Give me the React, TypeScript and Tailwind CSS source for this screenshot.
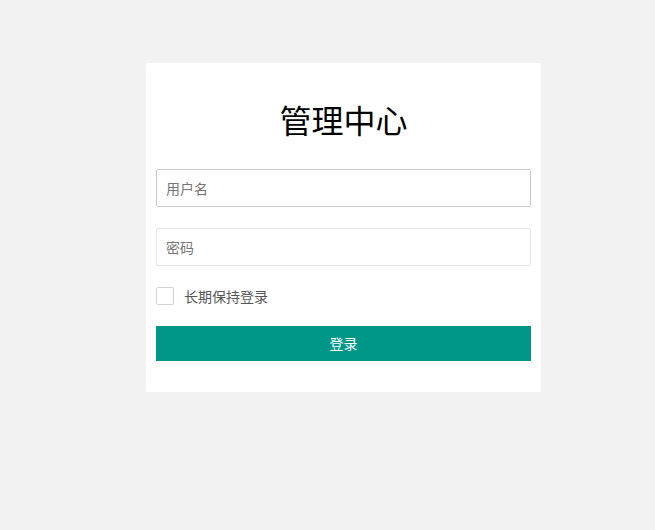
import { useState } from "react";

export default function App() {
  const [remember, setRemember] = useState(false);

  return (
    <div
      className="min-h-[530px] bg-[#f2f2f2] pt-[63px] pl-[146px]"
      style={{ fontFamily: '"Noto Sans CJK SC", "Noto Sans", sans-serif' }}
    >
      <div className="w-[395px] rounded-[2px] bg-white px-[10px] pt-[36px] pb-[31px]">
        {/* title */}
        <h1 className="text-center text-[32px] leading-[40px] font-normal text-[#000]">管理中心</h1>

        <form className="mt-[30px] flex flex-col gap-[21px]" onSubmit={(e) => e.preventDefault()}>
          <input
            autoFocus
            type="text"
            placeholder="用户名"
            className="h-[38px] w-full rounded-[2px] border border-[#c9c9c9] px-[9px] text-[14px] text-[#333] outline-none placeholder:text-[#757575]"
          />
          <input
            type="password"
            placeholder="密码"
            className="h-[38px] w-full rounded-[2px] border border-[#e6e6e6] px-[9px] text-[14px] text-[#333] outline-none placeholder:text-[#757575]"
          />

          {/* remember me */}
          <label className="flex h-[18px] cursor-pointer items-center gap-[10px]">
            <span
              onClick={() => setRemember(!remember)}
              className="h-[18px] w-[18px] rounded-[2px] border border-[#d2d2d2] bg-white"
            />
            <span className="text-[14px] leading-[18px] text-[#555]">长期保持登录</span>
          </label>

          <button
            type="submit"
            className="h-[35px] w-full bg-[#009688] text-[14px] text-white"
          >
            登录
          </button>
        </form>
      </div>
    </div>
  );
}
